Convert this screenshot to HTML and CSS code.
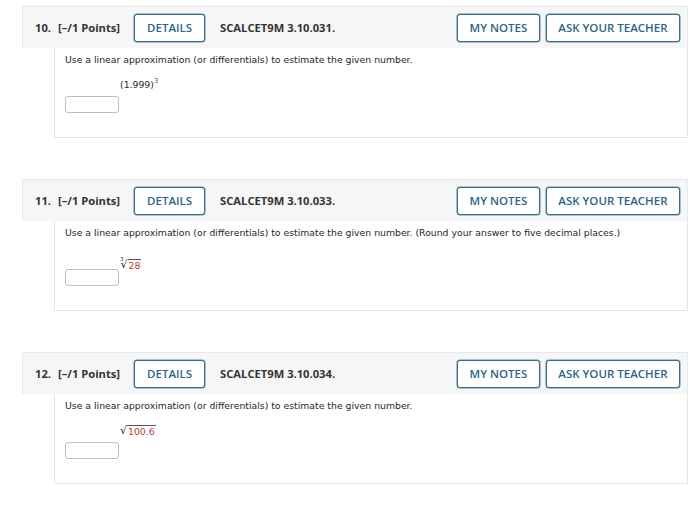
FILE: index.html
```html
<!DOCTYPE html>
<html>
<head>
<meta charset="utf-8">
<link rel="stylesheet" href="styles.css">
</head>
<body>
<div class="page">
  <div class="question">
    <div class="qhead">
      <span class="qnum">10.</span>
      <span class="qpts">[–/1 Points]</span>
      <span class="btn btn-details">DETAILS</span>
      <span class="qid">SCALCET9M 3.10.031.</span>
      <span class="spacer"></span>
      <span class="btn">MY NOTES</span>
      <span class="btn">ASK YOUR TEACHER</span>
    </div>
    <div class="qbody">
      <p class="prompt">Use a linear approximation (or differentials) to estimate the given number.</p>
      <div class="expr">(1.999)<sup class="red">3</sup></div>
      <span class="answer"></span>
    </div>
  </div>

  <div class="question">
    <div class="qhead">
      <span class="qnum">11.</span>
      <span class="qpts">[–/1 Points]</span>
      <span class="btn btn-details">DETAILS</span>
      <span class="qid">SCALCET9M 3.10.033.</span>
      <span class="spacer"></span>
      <span class="btn">MY NOTES</span>
      <span class="btn">ASK YOUR TEACHER</span>
    </div>
    <div class="qbody">
      <p class="prompt">Use a linear approximation (or differentials) to estimate the given number. (Round your answer to five decimal places.)</p>
      <div class="expr"><span class="root"><span class="idx">3</span><span class="rsign">√</span><span class="rad red">28</span></span></div>
      <span class="answer"></span>
    </div>
  </div>

  <div class="question">
    <div class="qhead">
      <span class="qnum">12.</span>
      <span class="qpts">[–/1 Points]</span>
      <span class="btn btn-details">DETAILS</span>
      <span class="qid">SCALCET9M 3.10.034.</span>
      <span class="spacer"></span>
      <span class="btn">MY NOTES</span>
      <span class="btn">ASK YOUR TEACHER</span>
    </div>
    <div class="qbody">
      <p class="prompt">Use a linear approximation (or differentials) to estimate the given number.</p>
      <div class="expr"><span class="root"><span class="rsign">√</span><span class="rad red">100.6</span></span></div>
      <span class="answer"></span>
    </div>
  </div>
</div>
</body>
</html>
```

FILE: styles.css
```css
html, body {
  margin: 0;
  padding: 0;
  background: #ffffff;
}
.page {
  padding: 6px 0 0 22px;
  width: 666px;
  display: flex;
  flex-direction: column;
  gap: 41px;
}
.question {
  display: flex;
  flex-direction: column;
}
.qhead {
  box-sizing: border-box;
  height: 42px;
  background: #f6f6f6;
  border: 1px solid #e8e8e8;
  border-bottom: none;
  display: flex;
  align-items: center;
  padding: 0 7px 0 12px;
  font-family: "Open Sans", sans-serif;
  font-weight: 700;
  font-size: 11.2px;
  color: #333333;
}
.qnum {
  margin-right: 7px;
}
.qpts {
  margin-right: 14px;
}
.qid {
  margin-left: 15px;
}
.spacer {
  flex: 1;
}
.btn {
  box-sizing: border-box;
  height: 28px;
  display: inline-flex;
  align-items: center;
  padding: 0 11.5px;
  border: 1px solid #3b6f88;
  border-radius: 3px;
  color: #2c6485;
  font-weight: 600;
  font-size: 11.5px;
  background: #ffffff;
  box-shadow: 0 0 0 0.5px #5a8aa0;
}
.btn-details {
  padding: 0 12px;
}
.btn + .btn {
  margin-left: 6px;
}
.qbody {
  box-sizing: border-box;
  margin-left: 32px;
  height: 90px;
  border: 1px solid #e6e6e6;
  border-top: none;
  padding: 6px 10px 0 10px;
  font-family: "DejaVu Sans", Verdana, sans-serif;
  font-size: 9.3px;
  color: #262626;
}
.prompt {
  margin: 0;
  line-height: 12px;
}
.expr {
  margin: 12px 0 0 55px;
  height: 14px;
  line-height: 14px;
}
.expr sup {
  font-size: 7px;
  vertical-align: 5px;
  line-height: 0;
}
.red {
  color: #c0392b;
}
.root {
  display: inline-flex;
  align-items: flex-end;
}
.idx {
  font-size: 5.5px;
  line-height: 6px;
  margin-right: -3px;
  align-self: flex-start;
  margin-top: -2px;
}
.rsign {
  font-size: 11px;
  line-height: 14px;
}
.rad {
  border-top: 1px solid #555555;
  line-height: 12px;
  padding: 0 1px;
}
.answer {
  display: block;
  box-sizing: border-box;
  width: 54px;
  height: 17px;
  margin-top: 4px;
  border: 1px solid #bdbdbd;
  border-radius: 3px;
  background: #ffffff;
}
```
